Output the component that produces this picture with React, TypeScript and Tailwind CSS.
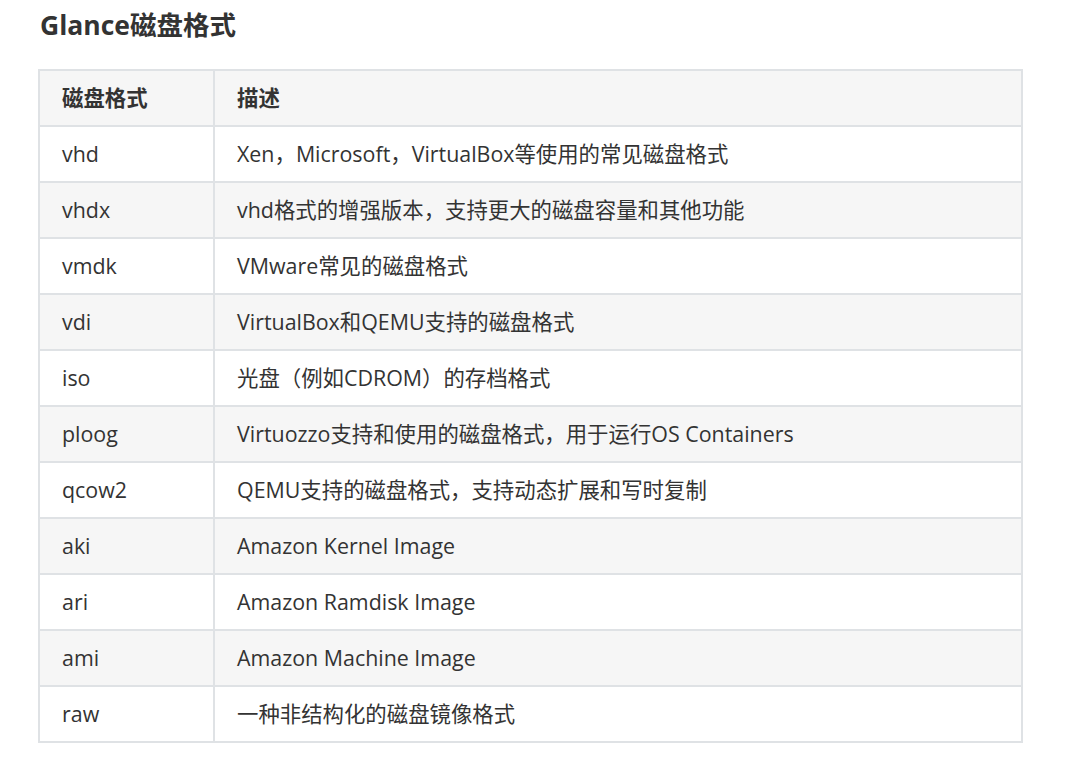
const rows: [string, string][] = [
  ['vhd', 'Xen，Microsoft，VirtualBox等使用的常见磁盘格式'],
  ['vhdx', 'vhd格式的增强版本，支持更大的磁盘容量和其他功能'],
  ['vmdk', 'VMware常见的磁盘格式'],
  ['vdi', 'VirtualBox和QEMU支持的磁盘格式'],
  ['iso', '光盘（例如CDROM）的存档格式'],
  ['ploog', 'Virtuozzo支持和使用的磁盘格式，用于运行OS Containers'],
  ['qcow2', 'QEMU支持的磁盘格式，支持动态扩展和写时复制'],
  ['aki', 'Amazon Kernel Image'],
  ['ari', 'Amazon Ramdisk Image'],
  ['ami', 'Amazon Machine Image'],
  ['raw', '一种非结构化的磁盘镜像格式'],
];

export default function App() {
  return (
    <div
      className="min-h-screen bg-white pl-[38px] pt-[6px] text-[#333]"
      style={{ fontFamily: '"Open Sans", "Noto Sans CJK SC", sans-serif' }}
    >
      <h2 className="pl-[2px] text-[26.5px] font-bold leading-[38px] text-[#333]">Glance磁盘格式</h2>
      <table className="mt-[25px] w-[985px] border-collapse text-[21.4px] leading-[28px]">
        <thead>
          <tr className="bg-[#f6f6f6]">
            <th className="w-[175px] border-2 border-[#dfe2e5] px-[22px] py-[13px] text-left font-bold">磁盘格式</th>
            <th className="border-2 border-[#dfe2e5] px-[22px] py-[13px] text-left font-bold">描述</th>
          </tr>
        </thead>
        <tbody>
          {rows.map(([fmt, desc], i) => (
            <tr key={fmt} className={i % 2 === 1 ? 'bg-[#f6f6f6]' : 'bg-white'}>
              <td className="border-2 border-[#dfe2e5] px-[22px] py-[13px]">{fmt}</td>
              <td className="border-2 border-[#dfe2e5] px-[22px] py-[13px]">{desc}</td>
            </tr>
          ))}
        </tbody>
      </table>
    </div>
  );
}
